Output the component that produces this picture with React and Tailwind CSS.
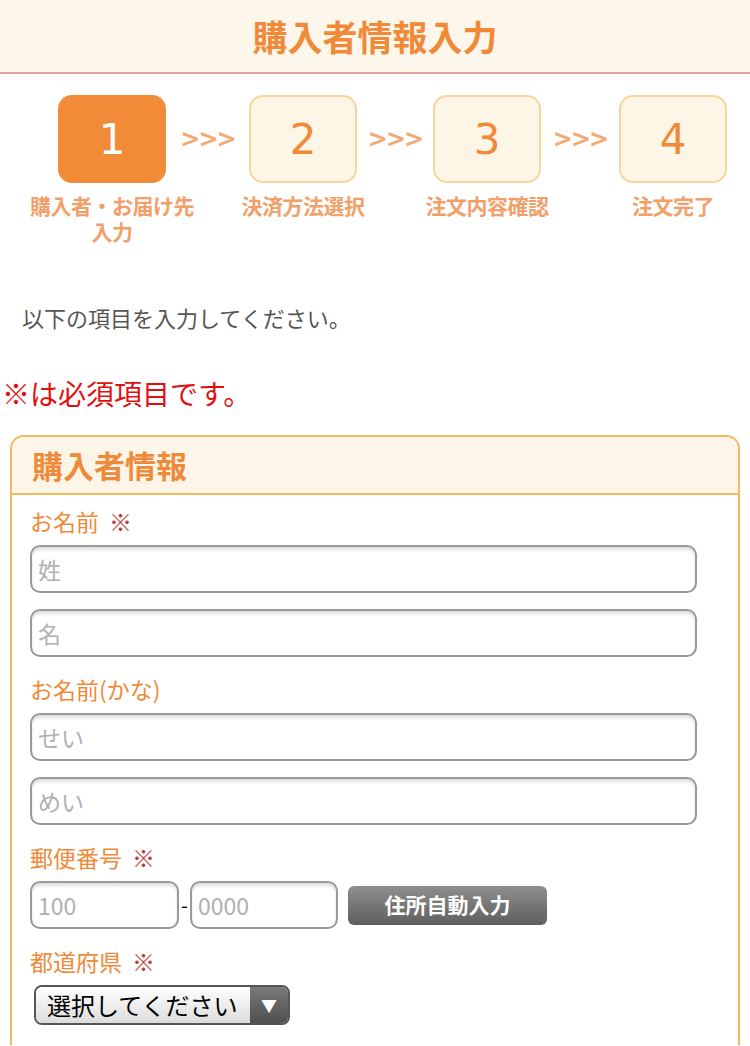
const jp = { fontFamily: '"Noto Sans CJK JP", "Noto Sans", sans-serif' };

function Step({ num, active, label }) {
  return (
    <div className="flex w-[108px] flex-col items-center">
      <div
        className={
          active
            ? "flex h-[88px] w-[108px] items-center justify-center rounded-[14px] bg-[#f28b37] text-[42px] text-white"
            : "flex h-[88px] w-[108px] items-center justify-center rounded-[14px] border-2 border-[#fad49e] bg-[#fdf5e6] text-[42px] text-[#f08a38]"
        }
        style={{ fontFamily: '"DejaVu Sans", sans-serif' }}
      >
        {num}
      </div>
      <div className="mt-[9px] w-[170px] text-center text-[21px] font-bold leading-[26px] tracking-[-0.5px] text-[#f2a06a]">
        {label}
      </div>
    </div>
  );
}

function Arrow({ w }) {
  return (
    <div
      className={`${w} flex h-[88px] items-center justify-center text-[24px] font-bold tracking-[-2px] text-[#f5a872]`}
      style={{ fontFamily: '"DejaVu Sans", sans-serif' }}
    >
      &gt;&gt;&gt;
    </div>
  );
}

function Label({ children, req }) {
  return (
    <div className="flex h-[30px] items-center text-[23px] text-[#ef8a3a]">
      <span>{children}</span>
      {req ? <span className="ml-[10px] text-[#c23a3a]">※</span> : null}
    </div>
  );
}

function Field({ placeholder, className = "w-full" }) {
  return (
    <div
      className={`${className} flex h-[48px] items-center rounded-[10px] border-2 border-[#9a9a9a] bg-white pl-[6px] text-[23px] text-[#b0b0b0] shadow-[inset_0_3px_3px_rgba(0,0,0,0.12)]`}
    >
      {placeholder}
    </div>
  );
}

export default function App() {
  return (
    <div className="min-h-[1046px] w-[750px] bg-white" style={jp}>
      <div className="flex h-[74px] items-center justify-center border-b-2 border-[#e9a19c] bg-[#fdf6ea]">
        <h1 className="text-[35px] font-bold text-[#f08a38]">購入者情報入力</h1>
      </div>

      <div className="flex pl-[58px] pt-[21px]">
        <Step num="1" active label={<>購入者・お届け先<br />入力</>} />
        <Arrow w="w-[83px]" />
        <Step num="2" label="決済方法選択" />
        <Arrow w="w-[76px]" />
        <Step num="3" label="注文内容確認" />
        <Arrow w="w-[78px]" />
        <Step num="4" label="注文完了" />
      </div>

      <p className="mt-[57px] pl-[22px] text-[22px] leading-[32px] text-[#555]">
        以下の項目を入力してください。
      </p>
      <p className="mt-[42px] pl-[2px] text-[28px] leading-[36px] text-[#e01010]">
        ※は必須項目です。
      </p>

      <div className="mx-[10px] mt-[24px] rounded-t-[14px] border-2 border-b-0 border-[#f2b95e]">
        <div className="flex h-[58px] items-center rounded-t-[12px] border-b-2 border-[#f2b95e] bg-[#fdf6e8] pl-[20px]">
          <h2 className="text-[31px] font-bold text-[#ef8a3a]">購入者情報</h2>
        </div>
        <div className="pb-[20px] pl-[18px] pr-[41px] pt-[11px]">
          <Label req>お名前</Label>
          <div className="mt-[9px] flex flex-col gap-[16px]">
            <Field placeholder="姓" />
            <Field placeholder="名" />
          </div>

          <div className="mt-[17px]">
            <Label>お名前(かな)</Label>
          </div>
          <div className="mt-[9px] flex flex-col gap-[16px]">
            <Field placeholder="せい" />
            <Field placeholder="めい" />
          </div>

          <div className="mt-[17px]">
            <Label req>郵便番号</Label>
          </div>
          <div className="mt-[9px] flex items-center">
            <Field placeholder="100" className="w-[149px]" />
            <span className="w-[11px] text-center text-[20px] text-black">-</span>
            <Field placeholder="0000" className="w-[148px]" />
            <button className="ml-[10px] h-[39px] w-[199px] rounded-[6px] bg-gradient-to-b from-[#8e8e8e] to-[#5f5f5f] text-[21px] font-bold text-white">
              住所自動入力
            </button>
          </div>

          <div className="mt-[17px]">
            <Label req>都道府県</Label>
          </div>
          <div className="ml-[4px] mt-[9px] flex h-[40px] w-[256px] overflow-hidden rounded-[8px] border-2 border-[#555]">
            <div className="flex flex-1 items-center bg-gradient-to-b from-white to-[#dcdcdc] pl-[11px] text-[24px] text-black">
              選択してください
            </div>
            <div className="flex w-[38px] items-center justify-center bg-gradient-to-b from-[#7a7a7a] to-[#4f4f4f] text-[16px] text-white">
              ▼
            </div>
          </div>
        </div>
      </div>
    </div>
  );
}
